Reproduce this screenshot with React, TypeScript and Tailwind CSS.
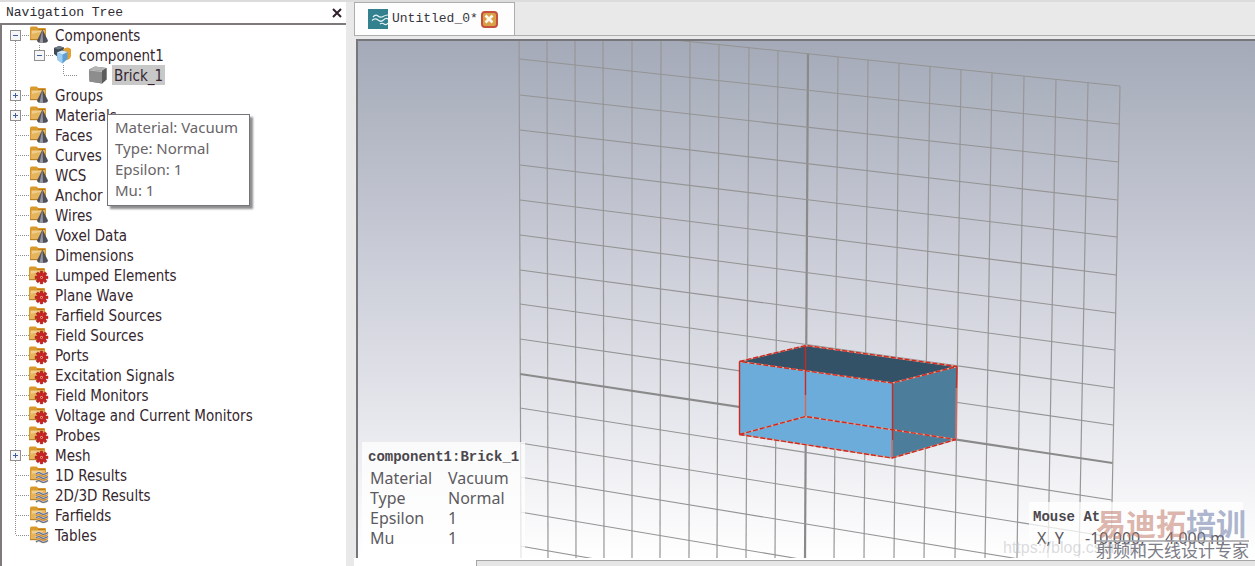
import { useState, type FC, type ReactNode } from 'react';

type IconKind = 'cone' | 'gear' | 'waves' | 'component' | 'brick';

interface TreeNode {
  label: string;
  icon: IconKind;
  expandable?: boolean;
  children?: TreeNode[];
}

const tree: TreeNode[] = [
  {
    label: 'Components',
    icon: 'cone',
    expandable: true,
    children: [
      {
        label: 'component1',
        icon: 'component',
        expandable: true,
        children: [{ label: 'Brick_1', icon: 'brick' }]
      }
    ]
  },
  { label: 'Groups', icon: 'cone', expandable: true },
  { label: 'Materials', icon: 'cone', expandable: true },
  { label: 'Faces', icon: 'cone' },
  { label: 'Curves', icon: 'cone' },
  { label: 'WCS', icon: 'cone' },
  { label: 'Anchor', icon: 'cone' },
  { label: 'Wires', icon: 'cone' },
  { label: 'Voxel Data', icon: 'cone' },
  { label: 'Dimensions', icon: 'cone' },
  { label: 'Lumped Elements', icon: 'gear' },
  { label: 'Plane Wave', icon: 'gear' },
  { label: 'Farfield Sources', icon: 'gear' },
  { label: 'Field Sources', icon: 'gear' },
  { label: 'Ports', icon: 'gear' },
  { label: 'Excitation Signals', icon: 'gear' },
  { label: 'Field Monitors', icon: 'gear' },
  { label: 'Voltage and Current Monitors', icon: 'gear' },
  { label: 'Probes', icon: 'gear' },
  { label: 'Mesh', icon: 'gear', expandable: true },
  { label: '1D Results', icon: 'waves' },
  { label: '2D/3D Results', icon: 'waves' },
  { label: 'Farfields', icon: 'waves' },
  { label: 'Tables', icon: 'waves' }
];

const brickInfo = [
  ['Material', 'Vacuum'],
  ['Type', 'Normal'],
  ['Epsilon', '1'],
  ['Mu', '1']
];

// working plane: [x at the top, x at the bottom] of every vertical line
const columns = [
  [519, 521], [547, 548], [575, 576], [603, 604], [632, 632], [661, 660], [690, 689],
  [719, 717], [749, 746], [778, 775], [808, 805], [838, 834], [868, 864], [899, 894],
  [930, 924], [961, 955], [992, 985], [1024, 1017], [1056, 1048], [1088, 1079], [1120, 1111]
];

// [y at the left edge, y at the right edge] of every horizontal line
const rows = [
  [24, 86], [59, 124], [95, 162], [130, 200], [165, 237], [200, 275], [235, 313], [270, 350],
  [304, 388], [339, 425], [374, 463], [408, 500], [443, 537], [477, 574], [512, 611], [546, 648]
];

const FolderShape: FC<{ x: number }> = ({ x }) => (
  <g transform={`translate(${x} 0)`}>
    <path d="M0 3 Q0 1.5 1.5 1.5 H6.5 Q7.5 1.5 8 3 H15 Q16 3 16 4 V15 H0 Z" fill="#d9992d" />
    <path d="M8 4 H15 V5 H8 Z" fill="#b87a1c" />
    <path d="M1.5 5.5 H15 V14 H1.5 Z" fill="#efcd8e" />
    <path d="M1.5 9 L15 6 V14 H1.5 Z" fill="#e5b45c" />
    <path d="M0 14 H16 V15.2 H0 Z" fill="#b9822a" />
  </g>
);

const NodeIcon: FC<{ kind: IconKind }> = ({ kind }) => (
  <svg className="w-5 h-5 shrink-0" viewBox="0 0 20 20" aria-hidden="true">
    {kind === 'cone' && (
      <>
        <FolderShape x={1} />
        <path d="M13.5 4.5 L8 15.5 Q8 18 13.5 18 Q19 18 19 15.5 Z" fill="#50505b" />
        <path d="M13.5 4.5 L10.5 17.4 Q12 18 14 18 Z" fill="#9797a3" />
      </>
    )}
    {kind === 'gear' && (
      <>
        <FolderShape x={0} />
        <g fill="#c42424" stroke="#8f1717" strokeWidth="0.4">
          {[0, 45, 90, 135, 180, 225, 270, 315].map((angle) => (
            <rect key={angle} x="11.1" y="5.9" width="2.8" height="4" rx="0.6" transform={`rotate(${angle} 12.5 12.4)`} />
          ))}
        </g>
        <circle cx="12.5" cy="12.4" r="4.6" fill="#c42424" />
        <circle cx="12.5" cy="12.4" r="1.3" fill="#efb08a" />
        <circle cx="12.5" cy="12.4" r="0.6" fill="#a01c1c" />
      </>
    )}
    {kind === 'waves' && (
      <>
        <FolderShape x={1} />
        <g fill="none" strokeWidth="2.6" stroke="#f0dcb8">
          <path d="M7 9 Q9.5 6.5 12 8.5 T19 7.5" />
          <path d="M7 13 Q9.5 10.5 12 12.5 T19 11.5" />
          <path d="M7 17 Q9.5 14.5 12 16.5 T19 15.5" />
        </g>
        <g fill="none" strokeWidth="1.2">
          <path d="M7 9 Q9.5 6.5 12 8.5 T19 7.5" stroke="#5a6c94" />
          <path d="M7 11 Q9.5 8.5 12 10.5 T19 9.5" stroke="#d08a34" />
          <path d="M7 13 Q9.5 10.5 12 12.5 T19 11.5" stroke="#5a6c94" />
          <path d="M7 15 Q9.5 12.5 12 14.5 T19 13.5" stroke="#d08a34" />
          <path d="M7 17 Q9.5 14.5 12 16.5 T19 15.5" stroke="#5a6c94" />
        </g>
      </>
    )}
    {kind === 'component' && (
      <>
        <path d="M1 3 L6 1 L11 2.5 V9 L5 12 L1 9 Z" fill="#3f4a55" />
        <path d="M1 3 L6 1 L11 2.5 L5.5 4.5 Z" fill="#6e7983" />
        <path d="M10 4 Q15 1 18 4 V11 Q17 15 13 15 Z" fill="#e0a032" />
        <path d="M4 7.5 L9 5.5 L14.5 7 V14 L9.5 18.5 L4.5 15 Z" fill="#5b9fd6" />
        <path d="M4 7.5 L9 5.5 L14.5 7 L9.5 9.5 Z" fill="#d6ebfa" />
        <path d="M4 7.5 L9.5 9.5 V18.5 L4.5 15 Z" fill="#9fcdf0" />
      </>
    )}
    {kind === 'brick' && (
      <>
        <path d="M1 4.5 L7 1.5 L18.5 3 V14.5 L14 18.5 L1.5 16.5 Z" fill="#6f6f6f" />
        <path d="M1 4.5 L7 1.5 L18.5 3 L14 6 Z" fill="#b4b4b4" />
        <path d="M1 4.5 L14 6 V18.5 L1.5 16.5 Z" fill="#8d8d8d" />
        <path d="M14 6 L18.5 3 V14.5 L14 18.5 Z" fill="#5c5c5c" />
        <path d="M1.5 5 L14 6.5" stroke="#d8d8d8" strokeWidth="0.7" />
      </>
    )}
  </svg>
);

interface GutterProps {
  depth: number;
  expandable: boolean;
  open: boolean;
  first: boolean;
  last: boolean;
}

// dotted connector lines plus the expand box in front of a node
const Gutter: FC<GutterProps> = ({ depth, expandable, open, first, last }) => {
  const box = depth === 0 ? 8 : 32;
  const line = depth === 2 ? 61 : box + 5;
  return (
    <svg
      className={depth === 0 ? 'w-[27px] h-5' : depth === 1 ? 'w-[51px] h-5' : 'w-[86px] h-5'}
      fill="none"
      shapeRendering="crispEdges"
    >
      <g stroke="#8c8c8c" strokeDasharray="1 1">
        <path d={`M13.5 ${first ? 10 : 0} V${last ? 10 : 20}`} />
        {depth > 0 && <path d={`M${line}.5 0 V10`} />}
        <path d={`M${line + 1} 10.5 H${depth === 2 ? 75 : line + 14}`} />
      </g>
      {expandable && (
        <>
          <rect x={box + 0.5} y="5.5" width="10" height="10" fill="#f6f6f6" stroke="#8f8f8f" />
          <path d={`M${box + 3} 10.5 H${box + 8}`} stroke="#3f5f9f" />
          {!open && <path d={`M${box + 5.5} 8 V13`} stroke="#3f5f9f" />}
        </>
      )}
    </svg>
  );
};

interface TreeItemProps {
  node: TreeNode;
  depth: number;
  first?: boolean;
  last?: boolean;
}

const TreeItem: FC<TreeItemProps> = ({ node, depth, first = false, last = false }) => {
  const [open, setOpen] = useState(!!node.children);
  const gutter: ReactNode = (
    <Gutter depth={depth} expandable={!!node.expandable} open={open} first={first} last={last} />
  );

  return (
    <li>
      <div className="flex items-center h-5">
        {node.expandable ? (
          <button type="button" aria-label={`Toggle ${node.label}`} onClick={() => setOpen(!open)}>
            {gutter}
          </button>
        ) : (
          gutter
        )}
        <NodeIcon kind={node.icon} />
        <span
          className={
            node.icon === 'brick'
              ? 'ml-1 px-0.5 pt-0.5 bg-[#c8c8c8] leading-[18px]'
              : 'ml-1 px-0.5 pt-0.5 leading-[18px]'
          }
        >
          {node.label}
        </span>
      </div>
      {open && node.children && (
        <ul>
          {node.children.map((child) => (
            <TreeItem key={child.label} node={child} depth={depth + 1} />
          ))}
        </ul>
      )}
    </li>
  );
};

const NavigationTree: FC = () => (
  <aside className="flex flex-col w-[346px] shrink-0 bg-white border-t-2 border-[#dcdcdc]">
    <header className="flex items-center justify-between h-[23px] pl-1.5 pr-[3px] border-b-2 border-[#7d797c]">
      <h2 className="font-['Liberation_Mono',monospace] text-[13px] leading-5 text-[#2e2a33]">Navigation Tree</h2>
      <button type="button" aria-label="Close navigation tree" className="p-px">
        <svg className="w-2.5 h-2.5" viewBox="0 0 10 10" fill="none" stroke="#30202c" strokeWidth="2">
          <path d="M1 1 L9 9 M9 1 L1 9" />
        </svg>
      </button>
    </header>
    <div className="relative flex-1 border-l-2 border-[#7d797c]">
      <ul className="font-['DejaVu_Sans_Condensed','DejaVu_Sans',sans-serif] text-[15px] text-[#35262e] whitespace-nowrap">
        {tree.map((node, i) => (
          <TreeItem key={node.label} node={node} depth={0} first={i === 0} last={i === tree.length - 1} />
        ))}
      </ul>
      <div
        role="tooltip"
        className="absolute left-[105px] top-[89px] w-[143px] pl-[7px] pt-0.5 pb-1 bg-white border border-[#77737a] shadow-[3px_3px_2px_#8e8e8e] font-['Noto_Sans',sans-serif] text-[15px] leading-[21px] text-[#686468] whitespace-nowrap"
      >
        <p>Material: Vacuum</p>
        <p>Type: Normal</p>
        <p>Epsilon: 1</p>
        <p>Mu: 1</p>
      </div>
    </div>
  </aside>
);

const Scene: FC = () => (
  <svg className="absolute inset-0 w-full h-full" viewBox="358 41 897 517" preserveAspectRatio="xMidYMid slice" fill="none">
    <g>
      {columns.map(([top, bottom], i) => (
        <line
          key={top}
          x1={top}
          y1={24 + ((top - 519) * 62) / 601}
          x2={bottom}
          y2="558"
          strokeWidth={i === 10 ? 2.2 : 1.2}
          stroke={i === 10 ? '#8a8a8a' : '#979797'}
        />
      ))}
      {rows.map(([left, right], i) => (
        <line
          key={left}
          x1="520"
          y1={left}
          x2={1120 - i * 0.75}
          y2={right}
          strokeWidth={i === 10 ? 2.2 : 1.1}
          stroke={i === 10 ? '#8a8a8a' : '#949494'}
        />
      ))}
    </g>
    <path d="M739.5 361.5 L806 345.5 L957 366.5 L892.5 383 Z" fill="#335268" />
    <path d="M739.5 361.5 L892.5 383 L892 458 L739.5 434.5 Z" fill="#6cacda" />
    <path d="M892.5 383 L957 366.5 L956 439.5 L892 458 Z" fill="#4c7e9c" />
    <g stroke="#d8a79b" strokeWidth="1.4">
      <path d="M739.5 434.5 L805.5 416.5 L956 439.5 M805.5 416.5 V395" />
      <path d="M892 458 V440 M956 439.5 L956.5 388" />
      <path d="M739.5 361.5 L806 345.5 L957 366.5 L892.5 383 Z" />
      <path d="M739.5 434.5 L892 458 L956 439.5" />
    </g>
    <g stroke="#cc2a20" strokeWidth="1.4">
      <path d="M739.5 434.5 V361.5 M892.5 383 V440 M957 366.5 L956.5 388 M805.5 345.5 V395" />
      <path d="M892 440 V458 M956.5 388 L956 439.5 M805.5 395 V416.5" strokeOpacity="0.5" />
      <g strokeDasharray="5 2">
        <path d="M739.5 361.5 L806 345.5 L957 366.5 L892.5 383 Z" />
        <path d="M739.5 434.5 L892 458 L956 439.5" />
        <path d="M739.5 434.5 L805.5 416.5 L956 439.5" />
      </g>
    </g>
  </svg>
);

const BrickPanel: FC = () => (
  <div className="absolute left-1 bottom-0 w-[163px] pt-1 pb-2.5 pl-1.5 bg-white/75">
    <table className="font-['Noto_Sans',sans-serif] text-base text-[#5c5a60]">
      <caption className="h-[22px] font-['Liberation_Mono',monospace] text-sm leading-[22px] font-bold text-[#4a474d] text-left whitespace-nowrap">
        component1:Brick_1
      </caption>
      <tbody>
        {brickInfo.map(([name, value]) => (
          <tr key={name} className="leading-5">
            <th scope="row" className="w-[78px] p-0 pl-0.5 font-normal text-left">{name}</th>
            <td className="p-0 pl-0.5">{value}</td>
          </tr>
        ))}
      </tbody>
    </table>
  </div>
);

const MousePanel: FC = () => (
  <div className="absolute right-3 bottom-0 w-[214px] h-14 pt-1 pl-1 bg-white/75">
    <h3 className="font-['Liberation_Mono',monospace] text-sm leading-[22px] font-bold text-[#4a474d]">Mouse At</h3>
    <p className="flex pl-1 font-['Noto_Sans',sans-serif] text-base leading-5 text-[#5c5a60] whitespace-nowrap">
      <span className="w-12">X, Y</span>
      <span className="w-20">-10.000,</span>
      <span>4.000 m</span>
    </p>
  </div>
);

const Watermark: FC = () => (
  <div className="absolute right-1.5 bottom-0 w-[153px] font-['Noto_Sans_CJK_SC',sans-serif] whitespace-nowrap">
    <p className="pb-0.5 text-[30px] leading-8 font-bold text-[#c07868]/55">
      易迪拓<span className="text-[#7e8cb2]/65">培训</span>
    </p>
    <p className="border-t-2 border-[#a4a4aa]/80 text-[17px] leading-4 text-[#7c7d86]">射频和天线设计专家</p>
  </div>
);

const Viewport: FC = () => (
  <main className="relative flex-1 min-h-[420px] border-l-2 border-t-2 border-[#77767b] bg-linear-to-b from-[#a4aab8] via-[#cfd1db] via-47% to-white">
    <Scene />
    <BrickPanel />
    <MousePanel />
    <p className="absolute right-[91px] bottom-0 w-[161px] font-['Liberation_Sans',sans-serif] text-base leading-5 text-[#c4c4c8]/60">
      https://blog.csdn.net
    </p>
    <Watermark />
  </main>
);

export default function App() {
  return (
    <div className="flex min-h-screen bg-[#e9e9e9]">
      <NavigationTree />
      <div className="flex flex-col flex-1 min-w-0 pl-2 border-t-2 border-[#dcdcdc]">
        <nav className="flex h-[34px] border-b border-[#adadad]">
          <div className="flex items-center w-[161px] pl-[13px] bg-[#fdfdfd] border border-b-0 border-[#adadad]">
            <svg className="w-5 h-5 shrink-0" viewBox="0 0 20 20" fill="none" aria-hidden="true">
              <path d="M0 0 H20 V20 H0 Z" fill="#33808f" />
              <g stroke="#e8f4f6" strokeWidth="1.2">
                <path d="M5 8 Q7.5 5 10 7 T15 7.5 T20 6" />
                <path d="M4 11.5 Q7 8.5 10 11 T15.5 11 T20 10" />
                <path d="M12 15 Q14 13.500 16 15 T20 14" />
              </g>
            </svg>
            <a href="#untitled" className="ml-1 font-['Liberation_Mono',monospace] text-[13px] leading-5 text-[#38343c]">
              Untitled_0*
            </a>
            <button
              type="button"
              aria-label="Close tab"
              className="flex items-center justify-center w-[17px] h-[17px] ml-[3px] rounded-sm border-2 border-[#c5503e] bg-[#d9a048]"
            >
              <svg className="w-2.5 h-2.5" viewBox="0 0 10 10" fill="none" stroke="#fffaf0" strokeWidth="2.6">
                <path d="M1.5 1.5 L8.5 8.5 M8.5 1.5 L1.5 8.5" />
              </svg>
            </button>
          </div>
        </nav>
        <div className="flex flex-col flex-1 pt-[3px] pl-0.5">
          <Viewport />
        </div>
        <footer className="flex h-2 pt-0.5 bg-white">
          <div className="w-[122px]" />
          <div className="flex-1 bg-[#e6e6e6] border-t border-l border-[#a5a5a5]" />
        </footer>
      </div>
    </div>
  );
}
